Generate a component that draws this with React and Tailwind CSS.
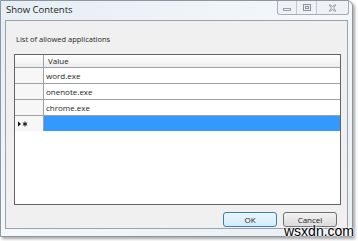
export default function App() {
  const font = { fontFamily: '"Open Sans", "Noto Sans", "Liberation Sans", sans-serif' };
  const rows = ["word.exe", "onenote.exe", "chrome.exe"];
  return (
    <div className="relative w-[358px] h-[241px] bg-white overflow-hidden" style={font}>
      <div className="w-[353px] h-[237px] rounded-tr-[6px] border border-[#8e96a0] bg-gradient-to-br from-[#e6edf4] via-[#f4f8fb] to-[#e9eef2] shadow-[2px_2px_3px_rgba(0,0,0,0.35)] flex flex-col">
        <div className="h-[19px] flex items-start justify-between">
          <div className="pl-[5px] pt-[3px] text-[9.5px] leading-[12px] text-[#1e1e1e]">Show Contents</div>
          <div className="flex h-[14px] mr-[3px] border border-t-0 border-[#a6adb5] rounded-b-[3px] bg-[#eef2f6]">
            <div className="w-[19px] flex items-center justify-center border-r border-[#c2c8ce]">
              <div className="w-[8px] h-[3px] border border-[#9aa0a6] mt-[4px]" />
            </div>
            <div className="w-[20px] flex items-center justify-center border-r border-[#c2c8ce]">
              <div className="w-[8px] h-[7px] border border-[#8a9096] flex items-center justify-center">
                <div className="w-[4px] h-[3px] border border-[#8a9096]" />
              </div>
            </div>
            <div className="w-[31px] flex items-center justify-center">
              <svg width="9" height="8" viewBox="0 0 9 8">
                <path d="M1 1 L3 1 L4.5 3 L6 1 L8 1 L5.5 4 L8 7 L6 7 L4.5 5 L3 7 L1 7 L3.5 4 Z" fill="none" stroke="#8a9096" strokeWidth="0.8" />
              </svg>
            </div>
          </div>
        </div>
        <div className="mx-[4px] h-[209px] bg-[#f0f0f0] border border-[#9aa2aa] flex flex-col">
          <div className="pl-[10px] pt-[13px] h-[33px] text-[7.5px] leading-[11px] text-[#1e1e1e]">List of allowed applications</div>
          <div className="ml-[8px] w-[327px] h-[151px] bg-white border border-[#646464] flex flex-col">
            <div className="flex h-[13px] border-b border-[#a0a0a0] bg-gradient-to-b from-white to-[#ecedef]">
              <div className="w-[29px] border-r border-[#a0a0a0]" />
              <div className="flex-1 pl-[4px] text-[8px] leading-[12px] text-[#1e1e1e]">Value</div>
            </div>
            {rows.map((r) => (
              <div key={r} className="flex h-[16px] border-b border-[#a0a0a0]">
                <div className="w-[29px] border-r border-[#a0a0a0] bg-[#f7f7f7]" />
                <div className="flex-1 pl-[2px] text-[8px] leading-[15px] text-[#1e1e1e]">{r}</div>
              </div>
            ))}
            <div className="flex h-[15px]">
              <div className="w-[29px] border-r border-[#a0a0a0] bg-[#f7f7f7] flex items-center pl-[3px]">
                <svg width="10" height="6" viewBox="0 0 10 6">
                  <path d="M0 0.5 L3 3 L0 5.5 Z" fill="#111" />
                  <path d="M7 0.5 V5.5 M4.8 1.8 L9.2 4.2 M4.8 4.2 L9.2 1.8" stroke="#111" strokeWidth="1" />
                </svg>
              </div>
              <div className="flex-1 bg-[#3399ff]" />
            </div>
          </div>
          <div className="flex justify-end gap-[6px] pr-[10px] pt-[7px]">
            <button className="w-[54px] h-[15px] rounded-[3px] border border-[#3c7fb1] bg-gradient-to-b from-[#eaf6fd] to-[#d3ecf9] text-[8px] leading-[12px] text-[#1e1e1e]">OK</button>
            <button className="w-[54px] h-[15px] rounded-[3px] border border-[#707070] bg-gradient-to-b from-[#f2f2f2] to-[#dcdcdc] text-[8px] leading-[12px] text-[#1e1e1e]">Cancel</button>
          </div>
        </div>
      </div>
      <div
        className="absolute left-[284px] top-[223px] text-[14px] leading-[16px] text-black"
        style={{ fontFamily: '"Liberation Sans", Arial, sans-serif', textShadow: "0 0 2px #fff, 0 0 2px #fff, 0 0 2px #fff" }}
      >
        wsxdn.com
      </div>
    </div>
  );
}
